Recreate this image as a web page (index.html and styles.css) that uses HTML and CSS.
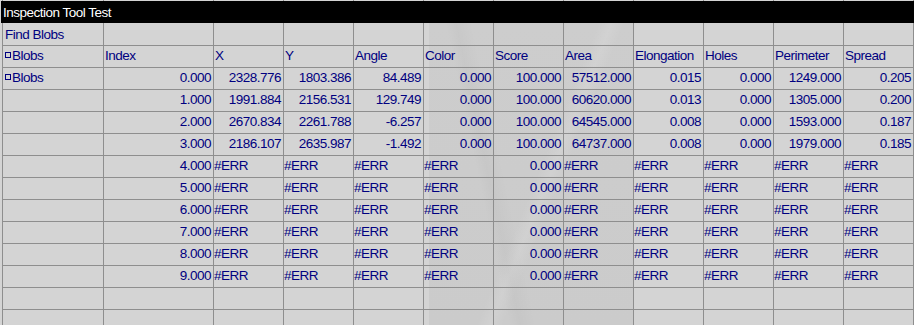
FILE: index.html
```html
<!DOCTYPE html>
<html>
<head>
<meta charset="utf-8">
<title>Inspection Tool Test</title>
<link rel="stylesheet" href="styles.css">
</head>
<body>
<div class="sheet">
  <div class="row strip">
    <div class="c"></div><div class="c"></div><div class="c"></div><div class="c"></div><div class="c"></div><div class="c"></div><div class="c"></div><div class="c"></div><div class="c"></div><div class="c"></div><div class="c"></div><div class="c"></div>
  </div>
  <div class="title">Inspection Tool Test</div>
  <div class="row find">
    <div class="c">Find Blobs</div><div class="c"></div><div class="c"></div><div class="c"></div><div class="c"></div><div class="c"></div><div class="c"></div><div class="c"></div><div class="c"></div><div class="c"></div><div class="c"></div><div class="c"></div>
  </div>
  <div class="row">
    <div class="c"><span class="box"></span>Blobs</div><div class="c">Index</div><div class="c">X</div><div class="c">Y</div><div class="c">Angle</div><div class="c">Color</div><div class="c">Score</div><div class="c">Area</div><div class="c">Elongation</div><div class="c">Holes</div><div class="c">Perimeter</div><div class="c">Spread</div>
  </div>
  <div class="row">
    <div class="c"><span class="box"></span>Blobs</div><div class="c r">0.000</div><div class="c r">2328.776</div><div class="c r">1803.386</div><div class="c r">84.489</div><div class="c r">0.000</div><div class="c r">100.000</div><div class="c r">57512.000</div><div class="c r">0.015</div><div class="c r">0.000</div><div class="c r">1249.000</div><div class="c r">0.205</div>
  </div>
  <div class="row">
    <div class="c"></div><div class="c r">1.000</div><div class="c r">1991.884</div><div class="c r">2156.531</div><div class="c r">129.749</div><div class="c r">0.000</div><div class="c r">100.000</div><div class="c r">60620.000</div><div class="c r">0.013</div><div class="c r">0.000</div><div class="c r">1305.000</div><div class="c r">0.200</div>
  </div>
  <div class="row">
    <div class="c"></div><div class="c r">2.000</div><div class="c r">2670.834</div><div class="c r">2261.788</div><div class="c r">-6.257</div><div class="c r">0.000</div><div class="c r">100.000</div><div class="c r">64545.000</div><div class="c r">0.008</div><div class="c r">0.000</div><div class="c r">1593.000</div><div class="c r">0.187</div>
  </div>
  <div class="row">
    <div class="c"></div><div class="c r">3.000</div><div class="c r">2186.107</div><div class="c r">2635.987</div><div class="c r">-1.492</div><div class="c r">0.000</div><div class="c r">100.000</div><div class="c r">64737.000</div><div class="c r">0.008</div><div class="c r">0.000</div><div class="c r">1979.000</div><div class="c r">0.185</div>
  </div>
  <div class="row">
    <div class="c"></div><div class="c r">4.000</div><div class="c e">#ERR</div><div class="c e">#ERR</div><div class="c e">#ERR</div><div class="c e">#ERR</div><div class="c r">0.000</div><div class="c e">#ERR</div><div class="c e">#ERR</div><div class="c e">#ERR</div><div class="c e">#ERR</div><div class="c e">#ERR</div>
  </div>
  <div class="row">
    <div class="c"></div><div class="c r">5.000</div><div class="c e">#ERR</div><div class="c e">#ERR</div><div class="c e">#ERR</div><div class="c e">#ERR</div><div class="c r">0.000</div><div class="c e">#ERR</div><div class="c e">#ERR</div><div class="c e">#ERR</div><div class="c e">#ERR</div><div class="c e">#ERR</div>
  </div>
  <div class="row">
    <div class="c"></div><div class="c r">6.000</div><div class="c e">#ERR</div><div class="c e">#ERR</div><div class="c e">#ERR</div><div class="c e">#ERR</div><div class="c r">0.000</div><div class="c e">#ERR</div><div class="c e">#ERR</div><div class="c e">#ERR</div><div class="c e">#ERR</div><div class="c e">#ERR</div>
  </div>
  <div class="row">
    <div class="c"></div><div class="c r">7.000</div><div class="c e">#ERR</div><div class="c e">#ERR</div><div class="c e">#ERR</div><div class="c e">#ERR</div><div class="c r">0.000</div><div class="c e">#ERR</div><div class="c e">#ERR</div><div class="c e">#ERR</div><div class="c e">#ERR</div><div class="c e">#ERR</div>
  </div>
  <div class="row">
    <div class="c"></div><div class="c r">8.000</div><div class="c e">#ERR</div><div class="c e">#ERR</div><div class="c e">#ERR</div><div class="c e">#ERR</div><div class="c r">0.000</div><div class="c e">#ERR</div><div class="c e">#ERR</div><div class="c e">#ERR</div><div class="c e">#ERR</div><div class="c e">#ERR</div>
  </div>
  <div class="row">
    <div class="c"></div><div class="c r">9.000</div><div class="c e">#ERR</div><div class="c e">#ERR</div><div class="c e">#ERR</div><div class="c e">#ERR</div><div class="c r">0.000</div><div class="c e">#ERR</div><div class="c e">#ERR</div><div class="c e">#ERR</div><div class="c e">#ERR</div><div class="c e">#ERR</div>
  </div>
  <div class="row">
    <div class="c"></div><div class="c"></div><div class="c"></div><div class="c"></div><div class="c"></div><div class="c"></div><div class="c"></div><div class="c"></div><div class="c"></div><div class="c"></div><div class="c"></div><div class="c"></div>
  </div>
  <div class="row">
    <div class="c"></div><div class="c"></div><div class="c"></div><div class="c"></div><div class="c"></div><div class="c"></div><div class="c"></div><div class="c"></div><div class="c"></div><div class="c"></div><div class="c"></div><div class="c"></div>
  </div>
</div>
</body>
</html>
```
FILE: styles.css
```css
html, body {
  margin: 0;
  padding: 0;
  overflow: hidden;
  background: #d4d4d4;
}

.sheet {
  width: 914px;
  height: 325px;
  box-sizing: border-box;
  padding-left: 2px;
  overflow: hidden;
  font-family: "Liberation Sans", Arial, sans-serif;
  font-size: 13.5px;
  letter-spacing: -0.5px;
  color: #000080;
  background:
    linear-gradient(112deg, transparent 52%, rgba(255,255,255,0.10) 56%, transparent 60%) 429px 23px / 204px 302px no-repeat,
    linear-gradient(78deg, transparent 30%, rgba(0,0,0,0.025) 34%, transparent 40%) 429px 23px / 204px 302px no-repeat,
    linear-gradient(#cdcdcd, #cbcbcb) 429px 23px / 204px 302px no-repeat,
    #d4d4d4;
}

.row {
  display: grid;
  grid-template-columns: 101px 110px repeat(10, 70px);
  border-left: 1px solid #8e8e8e;
}

.c {
  box-sizing: border-box;
  height: 22px;
  border-right: 1px solid #8e8e8e;
  border-bottom: 1px solid #8e8e8e;
  padding: 0 2px 0 1px;
  line-height: 19px;
  white-space: nowrap;
  overflow: hidden;
}

.r {
  text-align: right;
}

.e {
  padding-left: 0;
}

.strip .c {
  height: 1px;
  border-bottom: 0;
}

.find .c {
  height: 23px;
  padding-top: 2px;
}

.find .c:first-child {
  padding-left: 2px;
}

.title {
  box-sizing: border-box;
  height: 22px;
  margin-left: -1px;
  padding: 1px 0 0 2px;
  line-height: 22px;
  background: #000;
  color: #fff;
}

.box {
  display: inline-block;
  box-sizing: border-box;
  width: 6px;
  height: 6px;
  border: 1px solid #000080;
  margin: 0 1px 0 1px;
  vertical-align: 2px;
}
```
